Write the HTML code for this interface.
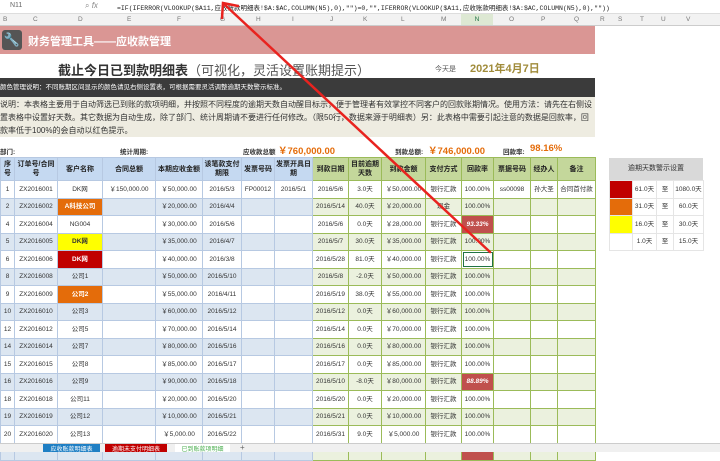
<!DOCTYPE html>
<html><head><meta charset="utf-8"><style>
*{margin:0;padding:0;box-sizing:border-box}
body{width:720px;height:452px;overflow:hidden;background:#fff;font-family:"Liberation Sans","Noto Sans CJK SC",sans-serif;position:relative;font-size:7px;color:#333}
.a{position:absolute}
table{position:absolute;left:0;top:157px;border-collapse:collapse;table-layout:fixed;width:595px}
td{height:17.5px;line-height:15px;vertical-align:middle;text-align:center;font-size:6.5px;border:1px solid #b7c9e2;white-space:nowrap;overflow:hidden;padding:0}
tr.h td{height:23px;font-weight:bold;font-size:7px;line-height:9px;white-space:normal;background:#c5d9f1;color:#222}
tr.h td.g{background:#c4d79b}
tr.b td{background:#dce6f1}
tr.b td.g{background:#ebf1de}
td.g{border-color:#9bbb59}
.or{background:#e46c0a!important;color:#fff;font-weight:bold}
.ye{background:#ffff00!important;font-weight:bold}
.dr{background:#c00000!important;color:#fff;font-weight:bold}
.rr{background:#c0504d!important;color:#fff;font-style:italic;font-weight:bold}
.p td{border:1px solid #e5e5e5;height:17.5px;font-size:6.5px}
</style></head><body>
<div class="a" style="left:0;top:0;width:720px;height:14px;background:#fff;border-bottom:1px solid #ddd"></div>
<div class="a" style="left:10px;top:2px;font-size:7px;color:#666">N11</div>
<div class="a" style="left:85px;top:1px;font-size:8px;color:#888">⌕ <i>fx</i></div>
<div class="a" style="left:117px;top:2px;font-size:6.5px;font-family:'Liberation Mono','Noto Sans CJK SC',monospace;color:#222;white-space:nowrap">=IF(IFERROR(VLOOKUP($A11,应收账款明细表!$A:$AC,COLUMN(N5),0),"")=0,"",IFERROR(VLOOKUP($A11,应收账款明细表!$A:$AC,COLUMN(N5),0),""))</div>
<div class="a" style="left:0;top:14px;width:720px;height:12px;background:#f2f2f2;border-bottom:1px solid #ccc;font-size:6.5px;color:#777;white-space:nowrap">
<span class="a" style="left:3px;top:2px">B</span><span class="a" style="left:33px;top:2px">C</span><span class="a" style="left:78px;top:2px">D</span><span class="a" style="left:127px;top:2px">E</span><span class="a" style="left:177px;top:2px">F</span><span class="a" style="left:220px;top:2px">G</span><span class="a" style="left:256px;top:2px">H</span><span class="a" style="left:292px;top:2px">I</span><span class="a" style="left:330px;top:2px">J</span><span class="a" style="left:363px;top:2px">K</span><span class="a" style="left:401px;top:2px">L</span><span class="a" style="left:441px;top:2px">M</span><span class="a" style="left:461px;top:0;width:32px;height:11px;background:#dde8d3;color:#217346;text-align:center;padding-top:2px">N</span><span class="a" style="left:509px;top:2px">O</span><span class="a" style="left:541px;top:2px">P</span><span class="a" style="left:574px;top:2px">Q</span><span class="a" style="left:600px;top:2px">R</span><span class="a" style="left:618px;top:2px">S</span><span class="a" style="left:640px;top:2px">T</span><span class="a" style="left:661px;top:2px">U</span><span class="a" style="left:686px;top:2px">V</span></div>
<div class="a" style="left:0;top:26px;width:595px;height:28px;background:#da9694"></div>
<div class="a" style="left:2px;top:30px;width:20px;height:20px;background:#555;border-radius:3px;color:#fff;font-size:13px;text-align:center;line-height:20px">🔧</div>
<div class="a" style="left:28px;top:33px;font-size:11px;color:#fff;font-weight:bold">财务管理工具——应收款管理</div>
<div class="a" style="left:58px;top:60px;font-size:13px;color:#333"><b>截止今日已到款明细表</b><span style="color:#555">（可视化，灵活设置账期提示）</span></div>
<div class="a" style="left:435px;top:64px;font-size:7px;color:#555">今天是</div>
<div class="a" style="left:470px;top:60px;font-size:11px;color:#a08b3a;font-weight:bold">2021年4月7日</div>
<div class="a" style="left:0;top:78px;width:595px;height:19px;background:#3b3b3b;color:#fff;font-size:6.5px;line-height:19px;white-space:nowrap">颜色管理说明：不同账期区间显示的颜色请见右侧设置表，可根据需要灵活调整逾期天数警示标准。</div>
<div class="a" style="left:0;top:97px;width:595px;height:40px;background:#eeece1;font-size:8px;line-height:13px;padding-top:1px;color:#333;overflow:hidden">说明：本表格主要用于自动筛选已到账的款项明细，并按照不同程度的逾期天数自动醒目标示，便于管理者有效掌控不同客户的回款账期情况。使用方法：请先在右侧设置表格中设置好天数。其它数据为自动生成，除了部门、统计周期请不要进行任何修改。（限50行，数据来源于明细表）另：此表格中需要引起注意的数据是回款率，回款率低于100%的会自动以红色提示。</div>
<div class="a" style="left:0;top:146px;font-size:6.5px;font-weight:bold;white-space:nowrap;width:600px;height:12px">
<span class="a" style="left:0">部门:</span><span class="a" style="left:120px">统计周期:</span><span class="a" style="left:243px">应收款总额</span><span class="a" style="left:278px;top:-3px;font-size:9.5px;color:#e46c0a">￥760,000.00</span><span class="a" style="left:395px">到款总额:</span><span class="a" style="left:428px;top:-3px;font-size:9.5px;color:#e46c0a">￥746,000.00</span><span class="a" style="left:503px">回款率:</span><span class="a" style="left:530px;top:-3px;font-size:9.5px;color:#e46c0a">98.16%</span></div>
<table>
<colgroup><col style="width:14px"><col style="width:43px"><col style="width:45px"><col style="width:53px"><col style="width:47px"><col style="width:39px"><col style="width:33px"><col style="width:38px"><col style="width:36px"><col style="width:33px"><col style="width:44px"><col style="width:36px"><col style="width:32px"><col style="width:37px"><col style="width:27px"><col style="width:38px"></colgroup>
<tr class="h"><td>序号</td><td>订单号/合同号</td><td>客户名称</td><td>合同总额</td><td>本期应收金额</td><td>该笔款支付期限</td><td>发票号码</td><td>发票开具日期</td><td class="g">到款日期</td><td class="g">目前逾期天数</td><td class="g">到款金额</td><td class="g">支付方式</td><td class="g">回款率</td><td class="g">票据号码</td><td class="g">经办人</td><td class="g">备注</td></tr>
<tr><td>1</td><td>ZX2016001</td><td>DK网</td><td>￥150,000.00</td><td>￥50,000.00</td><td>2016/5/3</td><td>FP00012</td><td>2016/5/1</td><td class="g">2016/5/6</td><td class="g">3.0天</td><td class="g">￥50,000.00</td><td class="g">银行汇款</td><td class="g">100.00%</td><td class="g">ss00098</td><td class="g">孙大圣</td><td class="g">合同首付款</td></tr>
<tr class="b"><td>2</td><td>ZX2016002</td><td class="or">A科技公司</td><td></td><td>￥20,000.00</td><td>2016/4/4</td><td></td><td></td><td class="g">2016/5/14</td><td class="g">40.0天</td><td class="g">￥20,000.00</td><td class="g">现金</td><td class="g">100.00%</td><td class="g"></td><td class="g"></td><td class="g"></td></tr>
<tr><td>4</td><td>ZX2016004</td><td>NG004</td><td></td><td>￥30,000.00</td><td>2016/5/6</td><td></td><td></td><td class="g">2016/5/6</td><td class="g">0.0天</td><td class="g">￥28,000.00</td><td class="g">银行汇款</td><td class="g rr">93.33%</td><td class="g"></td><td class="g"></td><td class="g"></td></tr>
<tr class="b"><td>5</td><td>ZX2016005</td><td class="ye">DK网</td><td></td><td>￥35,000.00</td><td>2016/4/7</td><td></td><td></td><td class="g">2016/5/7</td><td class="g">30.0天</td><td class="g">￥35,000.00</td><td class="g">银行汇款</td><td class="g">100.00%</td><td class="g"></td><td class="g"></td><td class="g"></td></tr>
<tr><td>6</td><td>ZX2016006</td><td class="dr">DK网</td><td></td><td>￥40,000.00</td><td>2016/3/8</td><td></td><td></td><td class="g">2016/5/28</td><td class="g">81.0天</td><td class="g">￥40,000.00</td><td class="g">银行汇款</td><td class="g" style="outline:1.5px solid #217346;outline-offset:-2px">100.00%</td><td class="g"></td><td class="g"></td><td class="g"></td></tr>
<tr class="b"><td>8</td><td>ZX2016008</td><td>公司1</td><td></td><td>￥50,000.00</td><td>2016/5/10</td><td></td><td></td><td class="g">2016/5/8</td><td class="g">-2.0天</td><td class="g">￥50,000.00</td><td class="g">银行汇款</td><td class="g">100.00%</td><td class="g"></td><td class="g"></td><td class="g"></td></tr>
<tr><td>9</td><td>ZX2016009</td><td class="or">公司2</td><td></td><td>￥55,000.00</td><td>2016/4/11</td><td></td><td></td><td class="g">2016/5/19</td><td class="g">38.0天</td><td class="g">￥55,000.00</td><td class="g">银行汇款</td><td class="g">100.00%</td><td class="g"></td><td class="g"></td><td class="g"></td></tr>
<tr class="b"><td>10</td><td>ZX2016010</td><td>公司3</td><td></td><td>￥60,000.00</td><td>2016/5/12</td><td></td><td></td><td class="g">2016/5/12</td><td class="g">0.0天</td><td class="g">￥60,000.00</td><td class="g">银行汇款</td><td class="g">100.00%</td><td class="g"></td><td class="g"></td><td class="g"></td></tr>
<tr><td>12</td><td>ZX2016012</td><td>公司5</td><td></td><td>￥70,000.00</td><td>2016/5/14</td><td></td><td></td><td class="g">2016/5/14</td><td class="g">0.0天</td><td class="g">￥70,000.00</td><td class="g">银行汇款</td><td class="g">100.00%</td><td class="g"></td><td class="g"></td><td class="g"></td></tr>
<tr class="b"><td>14</td><td>ZX2016014</td><td>公司7</td><td></td><td>￥80,000.00</td><td>2016/5/16</td><td></td><td></td><td class="g">2016/5/16</td><td class="g">0.0天</td><td class="g">￥80,000.00</td><td class="g">银行汇款</td><td class="g">100.00%</td><td class="g"></td><td class="g"></td><td class="g"></td></tr>
<tr><td>15</td><td>ZX2016015</td><td>公司8</td><td></td><td>￥85,000.00</td><td>2016/5/17</td><td></td><td></td><td class="g">2016/5/17</td><td class="g">0.0天</td><td class="g">￥85,000.00</td><td class="g">银行汇款</td><td class="g">100.00%</td><td class="g"></td><td class="g"></td><td class="g"></td></tr>
<tr class="b"><td>16</td><td>ZX2016016</td><td>公司9</td><td></td><td>￥90,000.00</td><td>2016/5/18</td><td></td><td></td><td class="g">2016/5/10</td><td class="g">-8.0天</td><td class="g">￥80,000.00</td><td class="g">银行汇款</td><td class="g rr">88.89%</td><td class="g"></td><td class="g"></td><td class="g"></td></tr>
<tr><td>18</td><td>ZX2016018</td><td>公司11</td><td></td><td>￥20,000.00</td><td>2016/5/20</td><td></td><td></td><td class="g">2016/5/20</td><td class="g">0.0天</td><td class="g">￥20,000.00</td><td class="g">银行汇款</td><td class="g">100.00%</td><td class="g"></td><td class="g"></td><td class="g"></td></tr>
<tr class="b"><td>19</td><td>ZX2016019</td><td>公司12</td><td></td><td>￥10,000.00</td><td>2016/5/21</td><td></td><td></td><td class="g">2016/5/21</td><td class="g">0.0天</td><td class="g">￥10,000.00</td><td class="g">银行汇款</td><td class="g">100.00%</td><td class="g"></td><td class="g"></td><td class="g"></td></tr>
<tr><td>20</td><td>ZX2016020</td><td>公司13</td><td></td><td>￥5,000.00</td><td>2016/5/22</td><td></td><td></td><td class="g">2016/5/31</td><td class="g">9.0天</td><td class="g">￥5,000.00</td><td class="g">银行汇款</td><td class="g">100.00%</td><td class="g"></td><td class="g"></td><td class="g"></td></tr>
<tr class="b"><td></td><td></td><td></td><td></td><td></td><td></td><td></td><td></td><td class="g"></td><td class="g"></td><td class="g"></td><td class="g"></td><td class="g rr"></td><td class="g"></td><td class="g"></td><td class="g"></td></tr>
</table>
<div class="a" style="left:609px;top:158px;width:94px;height:22px;background:#d9d9d9;font-size:7px;text-align:center;line-height:22px;color:#333">逾期天数警示设置</div>
<table class="p" style="left:609px;top:180px;width:94px;border-collapse:collapse">
<colgroup><col style="width:23px"><col style="width:24px"><col style="width:17px"><col style="width:30px"></colgroup>
<tr><td style="background:#c00000"></td><td>61.0天</td><td>至</td><td>1080.0天</td></tr>
<tr><td style="background:#e46c0a"></td><td>31.0天</td><td>至</td><td>60.0天</td></tr>
<tr><td style="background:#ffff00"></td><td>16.0天</td><td>至</td><td>30.0天</td></tr>
<tr><td></td><td>1.0天</td><td>至</td><td>15.0天</td></tr>
</table>
<div class="a" style="left:0;top:443px;width:720px;height:9px;background:#f0f0f0;border-top:1px solid #ccc"></div>
<div class="a" style="left:43px;top:444px;width:57px;height:8px;background:#1f7fc4;color:#fff;font-size:6px;text-align:center">应收账款明细表</div>
<div class="a" style="left:105px;top:444px;width:62px;height:8px;background:#c00000;color:#fff;font-size:6px;text-align:center">逾期未支付明细表</div>
<div class="a" style="left:175px;top:444px;width:55px;height:8px;background:#fff;color:#4caf50;font-size:6px;text-align:center">已到账款项明细</div>
<div class="a" style="left:240px;top:443px;font-size:8px;color:#666">+</div>
<svg class="a" style="left:0;top:0" width="720" height="452"><g stroke="#e8231f" stroke-width="2.5" fill="none" stroke-linecap="round"><line x1="224" y1="4" x2="490" y2="252"/><polyline points="222,18 223,3 238,6"/></g></svg>
</body></html>
